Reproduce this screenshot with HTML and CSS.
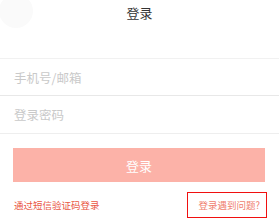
FILE: index.html
```html
<!DOCTYPE html>
<html lang="zh">
<head>
<meta charset="utf-8">
<link rel="stylesheet" href="styles.css">
</head>
<body>
<div class="page">
  <div class="header">
    <span class="back"></span>
    <div class="title">登录</div>
  </div>
  <div class="field">手机号/邮箱</div>
  <div class="field field-2">登录密码</div>
  <div class="btn">登录</div>
  <div class="links">
    <span class="sms">通过短信验证码登录</span>
    <span class="help">登录遇到问题?</span>
  </div>
</div>
</body>
</html>
```
FILE: styles.css
```css
html, body {
  margin: 0;
  padding: 0;
  background: #fff;
}
body {
  font-family: "Noto Sans CJK SC", "Noto Sans", sans-serif;
  width: 279px;
  height: 221px;
  overflow: hidden;
}
.page {
  position: relative;
}
.header {
  position: relative;
  height: 58px;
  border-bottom: 1px solid #f1f1f1;
}
.back {
  position: absolute;
  left: -1px;
  top: -6px;
  width: 34px;
  height: 34px;
  border-radius: 50%;
  background: #fafafa;
}
.title {
  position: relative;
  text-align: center;
  font-size: 13px;
  line-height: 18px;
  padding-top: 4px;
  color: #333;
}
.field {
  height: 36px;
  display: flex;
  align-items: center;
  padding-left: 14px;
  border-bottom: 1px solid #e8e8e8;
  font-size: 12.5px;
  color: #c9c9c9;
}
.field-2 {
  height: 37px;
  border-bottom-color: #eeeeee;
}
.btn {
  margin: 14px 14px 0 13px;
  height: 34px;
  background: #fcb2a8;
  color: #fff;
  font-size: 13px;
  display: flex;
  align-items: center;
  justify-content: center;
}
.links {
  margin-top: 10px;
  padding: 0 12px 0 14px;
  display: flex;
  justify-content: space-between;
  align-items: center;
  font-size: 9.5px;
}
.sms {
  color: #e9553f;
}
.help {
  border: 1px solid #f01010;
  height: 24px;
  line-height: 24px;
  padding: 0 6px 0 10px;
  color: #ef7e6e;
}
```
